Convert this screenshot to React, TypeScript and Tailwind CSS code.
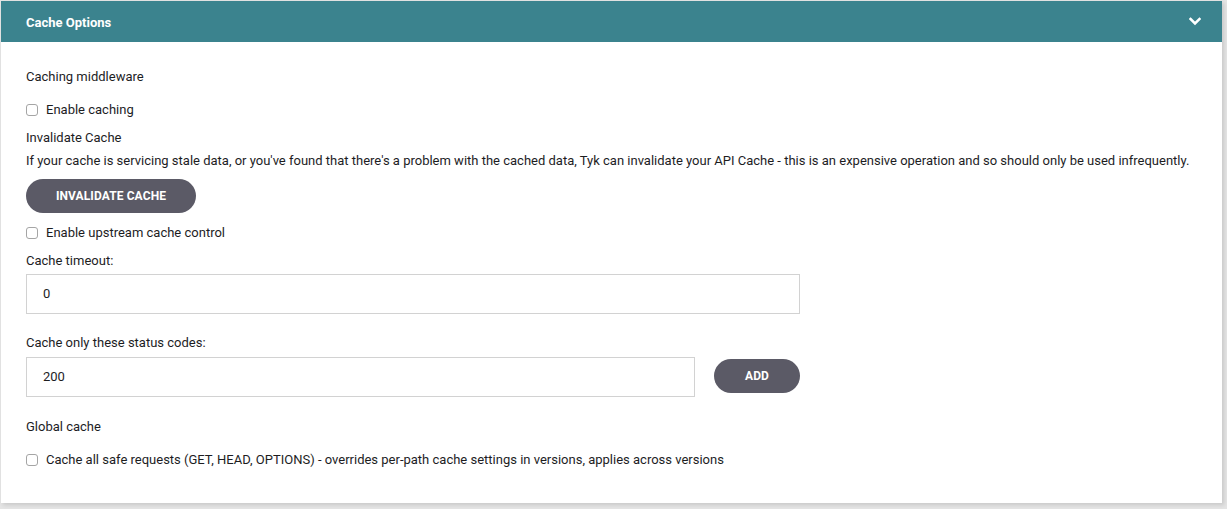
import React from "react";

function Check({ label }: { label: string }) {
  return (
    <label className="flex items-center gap-[8px] text-[13px] text-[#1d1d1f]">
      <span className="w-[12px] h-[12px] rounded-[3px] border border-[#a5a5a5] bg-white inline-block" />
      <span>{label}</span>
    </label>
  );
}

export default function App() {
  return (
    <div className="w-[1227px] h-[509px] bg-[#e4e4e4] pt-[1px] pl-[1px]" style={{ fontFamily: "Roboto, 'Liberation Sans', sans-serif" }}>
      <div className="w-[1221px] h-[502px] bg-white shadow-[2px_2px_4px_rgba(0,0,0,0.12)]">
        <div className="h-[41px] bg-[#3b838e] flex items-center justify-between pl-[25px] pr-[21px]">
          <span className="text-white font-bold text-[13px] pt-[2px]">Cache Options</span>
          <svg width="12" height="9" viewBox="0 0 12 9">
            <path d="M1.5 2 L6 6.5 L10.5 2" stroke="white" strokeWidth="2.6" fill="none" strokeLinecap="square" />
          </svg>
        </div>
        <div className="pl-[25px] pt-[26px] text-[13px] text-[#1d1d1f]">
          <div className="h-[18px] leading-[18px]">Caching middleware</div>
          <div className="mt-[15px] h-[18px] flex items-center"><Check label="Enable caching" /></div>
          <div className="mt-[10px] h-[18px] leading-[18px]">Invalidate Cache</div>
          <div className="mt-[5px] h-[18px] leading-[18px]">If your cache is servicing stale data, or you've found that there's a problem with the cached data, Tyk can invalidate your API Cache - this is an expensive operation and so should only be used infrequently.</div>
          <button className="mt-[9px] w-[170px] h-[34px] rounded-full bg-[#5b5a66] text-white font-bold text-[12px] tracking-[0.1px]">INVALIDATE CACHE</button>
          <div className="mt-[11px] h-[18px] flex items-center"><Check label="Enable upstream cache control" /></div>
          <div className="mt-[10px] h-[18px] leading-[18px]">Cache timeout:</div>
          <div className="mt-[4px] w-[774px] h-[40px] border border-[#d2d2d2] flex items-center pl-[16px]">0</div>
          <div className="mt-[20px] h-[18px] leading-[18px]">Cache only these status codes:</div>
          <div className="mt-[5px] flex items-start gap-[19px]">
            <div className="w-[669px] h-[40px] border border-[#d2d2d2] flex items-center pl-[16px]">200</div>
            <button className="mt-[2px] w-[86px] h-[34px] rounded-full bg-[#5b5a66] text-white font-bold text-[12px] tracking-[0.1px]">ADD</button>
          </div>
          <div className="mt-[21px] h-[18px] leading-[18px]">Global cache</div>
          <div className="mt-[15px] h-[18px] flex items-center"><Check label="Cache all safe requests (GET, HEAD, OPTIONS) - overrides per-path cache settings in versions, applies across versions" /></div>
        </div>
      </div>
    </div>
  );
}
